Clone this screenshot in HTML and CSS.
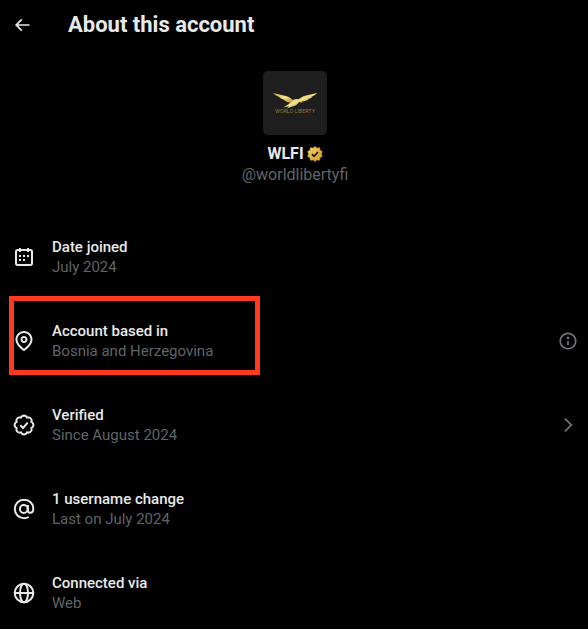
FILE: index.html
```html
<!DOCTYPE html>
<html lang="en">
<head>
    <meta charset="UTF-8">
    <meta name="viewport" content="width=device-width, initial-scale=1.0">
    <title>About this account</title>
    <link rel="stylesheet" href="styles.css">
</head>
<body>
    <header class="header">
        <button class="icon-button" type="button" aria-label="Back">
            <svg class="icon-small" viewBox="0 0 24 24"><path d="M7.414 13l5.043 5.04-1.414 1.42L3.586 12l7.457-7.46 1.414 1.42L7.414 11H21v2H7.414z"/></svg>
        </button>
        <h1>About this account</h1>
    </header>
    <main>
        <section class="profile">
            <svg class="avatar" viewBox="0 0 64 64" role="img" aria-label="World Liberty">
                <defs>
                    <linearGradient id="wing" x1="0" y1="0" x2="1" y2="1">
                        <stop offset="0" stop-color="#c9a23c"/>
                        <stop offset=".5" stop-color="#f3e48c"/>
                        <stop offset="1" stop-color="#a9822a"/>
                    </linearGradient>
                </defs>
                <path fill="url(#wing)" d="M10 22l13 3c4 1 6 3 8 5.500l-1 1.500c-4 0-6-1-9-2.500l2-.2c-3-.6-5-1.500-7-3l2 .2c-3-.8-6-2.300-8-4.500z"/>
                <path fill="url(#wing)" d="M54 22l-11 2.500c-4 1-6 2.500-8 4.500l3 1.500c4 0 6-1 8-2.500l-2 .1c3-.7 4-1.200 6-2.400l-2 .1c3-.9 4.500-1.800 6-3.800z"/>
                <path fill="url(#wing)" d="M30 29c2-1.500 5-1.500 7 0l3 2.800-4-.8c-2 3-4 4-7 4.600l-5 1.800 2-2.200-6 1.200c4-1.700 7-4 10-7.400z"/>
                <text class="avatar-text" x="32" y="42" text-anchor="middle">WORLD LIBERTY</text>
            </svg>
            <div class="name">
                <span>WLFI</span>
                <svg class="badge" viewBox="0 0 22 22" role="img" aria-label="Verified organization">
                    <defs>
                        <linearGradient id="gold" x1="0" y1="0" x2="1" y2="1">
                            <stop offset="0" stop-color="#f5d365"/>
                            <stop offset="1" stop-color="#d19a22"/>
                        </linearGradient>
                    </defs>
                    <path fill="url(#gold)" stroke="url(#gold)" stroke-linejoin="round" d="M13.596 3.011L11 .8 8.404 3.011l-3.576-.506-.624 3.558-3.19 1.692L2.6 11l-1.586 3.245 3.19 1.692.624 3.558 3.576-.506L11 21.2l2.596-2.211 3.576.506.624-3.558 3.19-1.692L19.4 11l1.586-3.245-3.19-1.692-.624-3.558z"/>
                    <path fill="none" stroke="#171205" stroke-width="2.2" d="M6.7 11.2l3 3 5.5-6"/>
                </svg>
            </div>
            <div class="handle">@worldlibertyfi</div>
        </section>
        <ul class="details">
            <li class="row">
                <svg class="icon" viewBox="0 0 24 24"><path d="M7 4V3h2v1h6V3h2v1h1.5C19.89 4 21 5.12 21 6.5v12c0 1.38-1.11 2.5-2.5 2.5h-13C4.12 21 3 19.88 3 18.5v-12C3 5.12 4.12 4 5.5 4H7zm0 2H5.5c-.27 0-.5.22-.5.5v12c0 .28.23.5.5.5h13c.28 0 .5-.22.5-.5v-12c0-.28-.22-.5-.5-.5H17v1h-2V6H9v1H7V6zm0 6h2v-2H7v2zm0 4h2v-2H7v2zm4-4h2v-2h-2v2zm0 4h2v-2h-2v2zm4-4h2v-2h-2v2z"/></svg>
                <div class="text">
                    <div class="label">Date joined</div>
                    <div class="value">July 2024</div>
                </div>
            </li>
            <li class="row">
                <svg class="icon" viewBox="0 0 24 24"><path d="M12 7c-1.93 0-3.5 1.57-3.5 3.5S10.07 14 12 14s3.5-1.57 3.5-3.5S13.93 7 12 7zm0 5c-.827 0-1.5-.673-1.5-1.5S11.173 9 12 9s1.5.673 1.5 1.5S12.827 12 12 12zm0-10c-4.687 0-8.5 3.813-8.5 8.5 0 5.967 7.621 11.116 7.945 11.332l.555.37.555-.37c.324-.216 7.945-5.365 7.945-11.332C20.5 5.813 16.687 2 12 2zm0 17.77c-1.665-1.241-6.5-5.196-6.5-9.27C5.5 6.916 8.416 4 12 4s6.5 2.916 6.5 6.5c0 4.073-4.835 8.028-6.5 9.27z"/></svg>
                <div class="text">
                    <div class="label">Account based in</div>
                    <div class="value">Bosnia and Herzegovina</div>
                </div>
                <button class="icon-button muted" type="button" aria-label="More information">
                    <svg class="icon-small" viewBox="0 0 24 24"><path d="M13.5 8.5c0 .83-.67 1.5-1.5 1.5s-1.5-.67-1.5-1.5S11.17 7 12 7s1.5.67 1.5 1.5zM13 17v-5h-2v5h2zm-1 5.25c5.66 0 10.25-4.59 10.25-10.25S17.66 1.75 12 1.75 1.75 6.34 1.75 12 6.34 22.25 12 22.25zM20.25 12c0 4.56-3.69 8.25-8.25 8.25S3.75 16.56 3.75 12 7.44 3.75 12 3.75s8.25 3.69 8.25 8.25z"/></svg>
                </button>
                <span class="highlight"></span>
            </li>
            <li>
                <a class="row" href="#verified">
                    <svg class="icon" viewBox="0 0 24 24">
                        <path class="line" transform="translate(1 1)" d="M20.396 11c-.018-.646-.215-1.275-.57-1.816-.354-.54-.852-.972-1.438-1.246.223-.607.27-1.264.14-1.897-.131-.634-.437-1.218-.882-1.687-.47-.445-1.053-.75-1.687-.882-.633-.13-1.29-.083-1.897.14-.273-.587-.704-1.086-1.245-1.44S11.647 1.62 11 1.604c-.646.017-1.273.213-1.813.568s-.969.854-1.24 1.44c-.608-.223-1.267-.272-1.902-.14-.635.13-1.22.436-1.69.882-.445.47-.749 1.055-.878 1.688-.13.633-.08 1.29.144 1.896-.587.274-1.087.705-1.443 1.245-.356.54-.555 1.17-.574 1.817.02.647.218 1.276.574 1.817.356.54.856.972 1.443 1.245-.224.606-.274 1.263-.144 1.896.13.634.433 1.218.877 1.688.47.443 1.054.747 1.687.878.633.132 1.29.084 1.897-.136.274.586.705 1.084 1.246 1.439.54.354 1.17.551 1.816.569.647-.016 1.276-.213 1.817-.567s.972-.854 1.245-1.44c.604.239 1.266.296 1.903.164.636-.132 1.22-.447 1.68-.907.46-.46.776-1.044.908-1.681s.075-1.299-.165-1.903c.586-.274 1.084-.705 1.439-1.246.354-.54.551-1.17.569-1.816z"/>
                        <path class="line" d="M8.3 12.3l2.7 2.7 4.7-5.3"/>
                    </svg>
                    <div class="text">
                        <div class="label">Verified</div>
                        <div class="value">Since August 2024</div>
                    </div>
                    <svg class="icon-small muted" viewBox="0 0 24 24"><path d="M14.586 12L7.543 4.96l1.414-1.42L17.414 12l-8.457 8.46-1.414-1.42L14.586 12z"/></svg>
                </a>
            </li>
            <li class="row">
                <svg class="icon" viewBox="0 0 24 24">
                    <circle class="line" cx="11.8" cy="12" r="3.9"/>
                    <path class="line" d="M15.9 8v5.2c0 1.6.9 2.6 2.3 2.6 1.9 0 3.1-1.6 3.1-4C21.3 6.5 17.3 2.8 12 2.8S2.8 6.9 2.8 12s4 9.2 9.2 9.2c1.7 0 3.3-.4 4.7-1.2"/>
                </svg>
                <div class="text">
                    <div class="label">1 username change</div>
                    <div class="value">Last on July 2024</div>
                </div>
            </li>
            <li class="row">
                <svg class="icon" viewBox="0 0 24 24">
                    <circle class="line" cx="12" cy="12" r="9.3"/>
                    <ellipse class="line" cx="12" cy="12" rx="4" ry="9.3"/>
                    <path class="line" d="M2.7 12h18.6"/>
                </svg>
                <div class="text">
                    <div class="label">Connected via</div>
                    <div class="value">Web</div>
                </div>
            </li>
        </ul>
    </main>
</body>
</html>
```
FILE: styles.css
```css
* {
    box-sizing: border-box;
}
body {
    margin: 0;
    background: #000000;
    color: #e7e9ea;
    font-family: Roboto, "Liberation Sans", sans-serif;
    font-size: 15px;
    line-height: 20px;
}
svg {
    display: block;
    flex-shrink: 0;
    fill: currentColor;
}
.header {
    display: flex;
    align-items: center;
    gap: 36px;
    height: 50px;
    padding: 0 12px;
}
h1 {
    margin: 0;
    font-size: 22px;
    font-weight: 700;
    line-height: 24px;
}
.icon-button {
    padding: 0;
    border: none;
    background: none;
    color: inherit;
    cursor: pointer;
}
.icon-small {
    width: 20px;
    height: 20px;
}
.icon {
    width: 24px;
    height: 24px;
}
.line {
    fill: none;
    stroke: currentColor;
    stroke-width: 2;
}
.profile {
    display: flex;
    flex-direction: column;
    align-items: center;
    padding: 21px 10px 30px 12px;
    font-size: 16px;
}
.avatar {
    width: 64px;
    height: 64px;
    margin-bottom: 9px;
    border-radius: 5px;
    background: #1e1e1e;
}
.avatar-text {
    fill: #8f7d3c;
    font-family: Inter, sans-serif;
    font-size: 5px;
}
.name {
    display: flex;
    align-items: center;
    gap: 3px;
    margin-bottom: 1px;
    font-weight: 700;
}
.badge {
    width: 16px;
    height: 16px;
}
.muted,
.icon-button.muted {
    color: #71767b;
}
.handle,
.value {
    color: #5f6468;
}
.details {
    margin: 0;
    padding: 0;
    list-style: none;
}
.row {
    position: relative;
    display: flex;
    align-items: center;
    gap: 16px;
    padding: 22px 10px 22px 12px;
    color: inherit;
    text-decoration: none;
}
.details > .row:last-child {
    padding-bottom: 12px;
}
.text {
    flex: 1;
}
.label {
    font-weight: 500;
}
/* red frame drawn over the location row */
.highlight {
    position: absolute;
    top: -3px;
    left: 9px;
    width: 251px;
    height: 79px;
    border: 5px solid #ff3a20;
    pointer-events: none;
}
```
